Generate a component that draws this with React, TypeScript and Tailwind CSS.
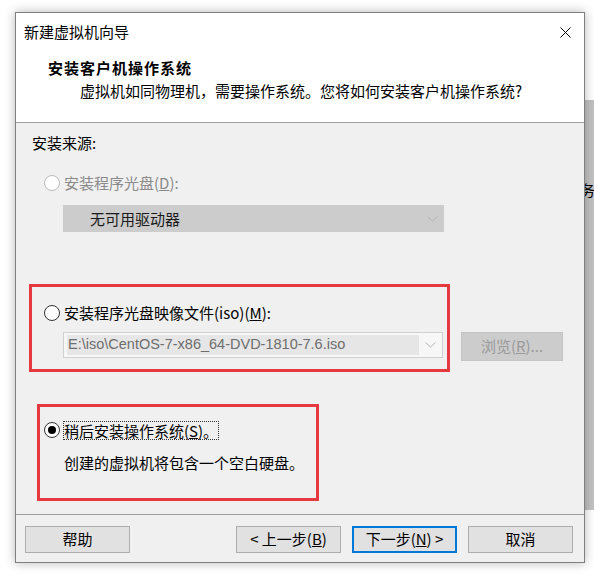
import React from "react";

const cjk = { fontFamily: '"Noto Sans CJK SC", "Noto Sans", sans-serif' };

function Radio({ disabled, checked }: { disabled?: boolean; checked?: boolean }) {
  return (
    <div
      className={
        "w-[16px] h-[16px] rounded-full border flex items-center justify-center shrink-0 bg-white " +
        (disabled ? "border-[#bcbcbc]" : "border-[#333333]")
      }
    >
      {checked && <div className="w-[8px] h-[8px] rounded-full bg-[#000000]" />}
    </div>
  );
}

function Chevron() {
  return (
    <svg width="11" height="6" viewBox="0 0 11 6" className="shrink-0">
      <path d="M0.5 0.5 L5.5 5 L10.5 0.5" fill="none" stroke="#b4b4b4" strokeWidth="1" />
    </svg>
  );
}

function Btn({ children, primary }: { children: React.ReactNode; primary?: boolean }) {
  return (
    <div
      className={
        "w-[105px] h-[27px] flex items-center justify-center bg-[#e1e1e1] text-[15px] text-black whitespace-pre " +
        (primary ? "border-2 border-[#0078d7]" : "border border-[#adadad]")
      }
    >
      {children}
    </div>
  );
}

export default function App() {
  return (
    <div className="relative w-[594px] h-[581px] bg-white overflow-hidden pt-[12px] pl-[15px]" style={cjk}>
      {/* window behind */}
      <div className="absolute left-[570px] top-[100px] w-[30px] h-[410px] bg-[#c2c2c2] border-l border-[#8f8f8f]">
        <div className="absolute left-[9px] top-[80px] text-[15px] leading-[20px] text-black">务</div>
      </div>

      <div className="relative w-[570px] h-[551px] border border-[#7f7f7f] bg-[#f0f0f0] shadow-[0_0_10px_rgba(0,0,0,0.28)] flex flex-col">
        {/* header */}
        <div className="bg-white border-b border-[#a0a0a0] pb-[20px]">
          <div className="h-[38px] flex items-center justify-between pl-[8px] pr-[13px]">
            <span className="text-[15px] text-black">新建虚拟机向导</span>
            <svg width="11" height="11" viewBox="0 0 11 11">
              <path d="M0.5 0.5 L10.5 10.5 M10.5 0.5 L0.5 10.5" stroke="#000" strokeWidth="1" />
            </svg>
          </div>
          <div className="mt-[6px] pl-[32px] text-[15px] leading-[22px] font-bold tracking-[1px] text-black">
            安装客户机操作系统
          </div>
          <div className="mt-[1px] pl-[64px] text-[15px] leading-[22px] text-black">
            虚拟机如同物理机，需要操作系统。您将如何安装客户机操作系统?
          </div>
        </div>

        {/* body */}
        <div className="relative h-[391px] px-[16px] pt-[10px] text-[15px] text-black">
          <div className="leading-[20px]">安装来源:</div>

          <div className="mt-[20px] ml-[12px] flex items-center gap-[4px] h-[20px]">
            <Radio disabled />
            <span className="text-[#8a8a8a] leading-[20px]">
              安装程序光盘(<span className="underline">D</span>):
            </span>
          </div>

          <div className="mt-[12px] ml-[31px] w-[381px] h-[27px] bg-[#cccccc] flex items-center justify-between pl-[27px] pr-[6px]">
            <span className="text-[#1a1a1a] leading-[20px]">无可用驱动器</span>
            <Chevron />
          </div>

          <div className="mt-[71px] ml-[12px] flex items-center gap-[4px] h-[20px]">
            <Radio />
            <span className="leading-[20px]">
              安装程序光盘映像文件(iso)(<span className="underline">M</span>):
            </span>
          </div>

          <div className="mt-[9px] ml-[31px] flex items-start gap-[18px]">
            <div className="w-[380px] h-[26px] border border-[#d0d0d0] bg-[#f7f7f7] flex items-center justify-between pl-[3px] pr-[6px]">
              <div className="h-[20px] w-[352px] bg-[#e6e6e6] flex items-center pl-[1px]">
                <span
                  className="text-[14.5px] text-[#6d6d6d] whitespace-nowrap"
                  style={{ fontFamily: '"Liberation Sans", Arial, sans-serif' }}
                >
                  E:\iso\CentOS-7-x86_64-DVD-1810-7.6.iso
                </span>
              </div>
              <Chevron />
            </div>
            <div className="w-[102px] h-[29px] bg-[#cccccc] border border-[#c4c4c4] flex items-center justify-center text-[#9a9a9a]">
              浏览(<span className="underline">R</span>)...
            </div>
          </div>

          <div className="mt-[59px] ml-[12px] flex items-center gap-[3px] h-[20px]">
            <Radio checked />
            <span className="leading-[17px] border border-dotted border-[#333333]">
              稍后安装操作系统(<span className="underline">S</span>)。
            </span>
          </div>

          <div className="mt-[13px] ml-[32px] leading-[20px]">创建的虚拟机将包含一个空白硬盘。</div>

          {/* annotation boxes */}
          <div className="absolute left-[13px] top-[161px] w-[421px] h-[88px] border-[3px] border-[#e5393f]" />
          <div className="absolute left-[21px] top-[281px] w-[282px] h-[97px] border-[3px] border-[#e5393f]" />
        </div>

        {/* footer */}
        <div className="border-t border-[#a0a0a0] flex-1 flex items-start pt-[11px] pl-[9px] pr-[11px]">
          <Btn>帮助</Btn>
          <div className="flex-1" />
          <div className="flex gap-[11px]">
            <Btn>
              {"< 上一步("}<span className="underline">B</span>)
            </Btn>
            <Btn primary>
              下一步(<span className="underline">N</span>){" >"}
            </Btn>
            <Btn>取消</Btn>
          </div>
        </div>
      </div>
    </div>
  );
}
